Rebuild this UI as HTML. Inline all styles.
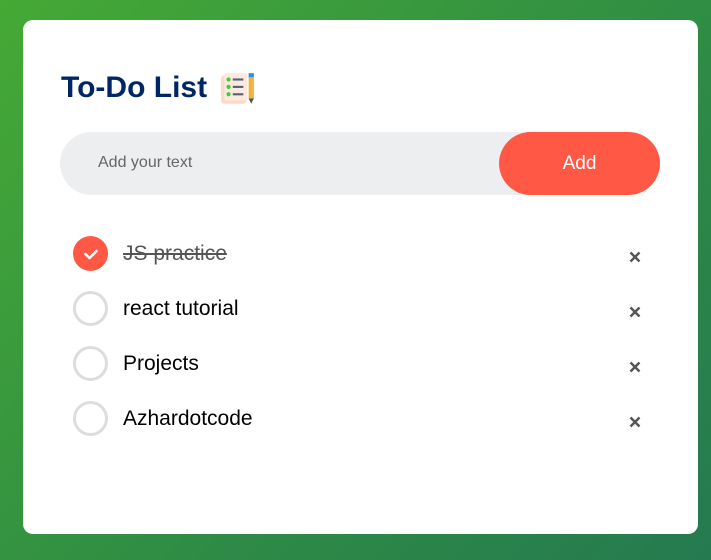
<!DOCTYPE html>
<html><head><style>
*{margin:0;padding:0;box-sizing:border-box}
body{width:711px;height:560px;overflow:hidden;background:linear-gradient(135deg,#45a935 0%,#2e8b45 60%,#257a50 100%);font-family:"Liberation Sans",Arial,sans-serif;position:relative}
.card{position:absolute;left:23px;top:20px;width:675px;height:514px;background:#fff;border-radius:10px}
h2{position:absolute;left:38px;top:51px;font-size:30px;color:#002765;font-weight:bold}
.icon{position:absolute;left:195px;top:51px}
.row{position:absolute;left:37px;top:112px;width:600px;height:63px;background:#edeef0;border-radius:32px}
.row span{position:absolute;left:38px;top:22px;font-size:16px;color:#666}
.btn{position:absolute;right:0;top:0;width:161px;height:63px;background:#ff5945;border-radius:32px;color:#fff;font-size:19px;text-align:center;line-height:63px}
.item{position:absolute;left:50px;height:36px;width:570px}
.c{position:absolute;left:0;top:0;width:35px;height:35px;border-radius:50%;border:3px solid #ddd}
.c.on{background:#ff5945;border:none}
.t{position:absolute;left:50px;top:6px;font-size:21px;color:#000}
.t.done{text-decoration:line-through;color:#555}
.x{position:absolute;left:556px;top:15px}
</style></head><body>
<div class="card">
<h2>To-Do List</h2>
<svg class="icon" width="38" height="36" viewBox="0 0 36 34">
<rect x="3" y="4" width="24" height="27" rx="3" fill="#fcd9c9"/>
<rect x="6" y="2" width="22" height="26" rx="2" fill="#fde9de"/>
<circle cx="10" cy="8" r="2" fill="#3ecf3e"/><rect x="14" y="7" width="10" height="2" fill="#55607a"/>
<circle cx="10" cy="15" r="2" fill="#3ecf3e"/><rect x="14" y="14" width="10" height="2" fill="#55607a"/>
<circle cx="10" cy="22" r="2" fill="#3ecf3e"/><rect x="14" y="21" width="10" height="2" fill="#55607a"/>
<rect x="29" y="2" width="5" height="4" fill="#2b8ef0"/><rect x="29" y="6" width="5" height="20" fill="#f2b33d"/><polygon points="29,26 34,26 31.5,31" fill="#555"/>
</svg>
<div class="row"><span>Add your text</span><div class="btn">Add</div></div>
<div class="item" style="top:216px"><div class="c on"><svg width="35" height="35"><path d="M12.5 18l4 4 7-7" stroke="#fff" stroke-width="2.6" fill="none" stroke-linecap="round" stroke-linejoin="round"/></svg></div><div class="t done">JS practice</div><svg class="x" width="12" height="12"><path d="M1.5 1.5l9 9M10.5 1.5l-9 9" stroke="#555" stroke-width="2.4"/></svg></div>
<div class="item" style="top:271px"><div class="c"></div><div class="t">react tutorial</div><svg class="x" width="12" height="12"><path d="M1.5 1.5l9 9M10.5 1.5l-9 9" stroke="#555" stroke-width="2.4"/></svg></div>
<div class="item" style="top:326px"><div class="c"></div><div class="t">Projects</div><svg class="x" width="12" height="12"><path d="M1.5 1.5l9 9M10.5 1.5l-9 9" stroke="#555" stroke-width="2.4"/></svg></div>
<div class="item" style="top:381px"><div class="c"></div><div class="t">Azhardotcode</div><svg class="x" width="12" height="12"><path d="M1.5 1.5l9 9M10.5 1.5l-9 9" stroke="#555" stroke-width="2.4"/></svg></div>
</div>
</body></html>
